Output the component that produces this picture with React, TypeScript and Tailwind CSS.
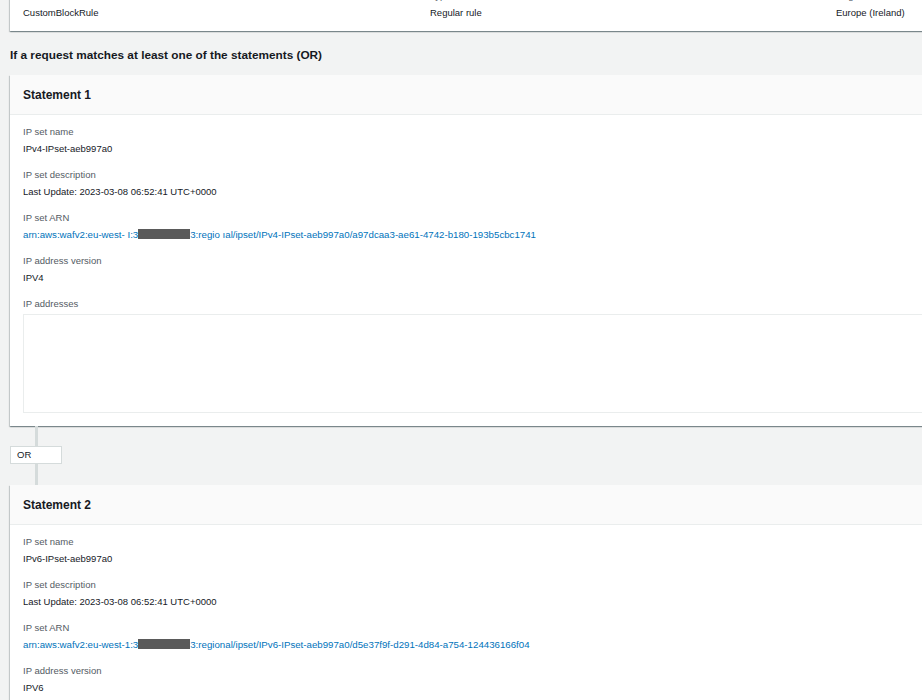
import React from 'react';

const font = { fontFamily: '"Liberation Sans", Arial, sans-serif' };

function Field({ label, children }: { label: string; children: React.ReactNode }) {
  return (
    <div className="flex flex-col">
      <div className="text-[9.5px] leading-[16px] text-[#545b64]">{label}</div>
      <div className="text-[9.5px] leading-[17px] text-[#16191f]">{children}</div>
    </div>
  );
}

function Redacted() {
  return <span className="inline-block h-[10px] w-[52px] align-[-1px] bg-[#5a5a5a]" />;
}

function StatementCard({
  title,
  name,
  arnHead,
  arnTail,
  version,
  showAddresses,
}: {
  title: string;
  name: string;
  arnHead: string;
  arnTail: string;
  version: string;
  showAddresses?: boolean;
}) {
  return (
    <div className="bg-white shadow-[0_1px_1px_0_rgba(0,28,36,0.3),1px_1px_1px_0_rgba(0,28,36,0.15),-1px_1px_1px_0_rgba(0,28,36,0.15)]">
      <div className="h-[40px] flex items-center px-[13px] bg-[#fafafa] border-b border-[#eaeded]">
        <span className="text-[12px] font-bold text-[#16191f]">{title}</span>
      </div>
      <div className="px-[13px] pt-[9px] pb-[13px] flex flex-col gap-[10px]">
        <Field label="IP set name">{name}</Field>
        <Field label="IP set description">Last Update: 2023-03-08 06:52:41 UTC+0000</Field>
        <Field label="IP set ARN">
          <span className="text-[#0073bb] text-[9.7px]">
            {arnHead}
            <Redacted />
            {arnTail}
          </span>
        </Field>
        <Field label="IP address version">{version}</Field>
        {showAddresses && (
          <div className="flex flex-col">
            <div className="text-[9.5px] leading-[16px] text-[#545b64]">IP addresses</div>
            <div className="mt-[2px] h-[99px] border border-[#eaeded] bg-white" />
          </div>
        )}
      </div>
    </div>
  );
}

export default function App() {
  return (
    <div className="w-full h-[700px] overflow-hidden bg-[#f2f3f3]" style={font}>
      <div className="w-[1260px] pl-[10px]">
        {/* rule summary */}
        <div className="-mt-[22px] bg-white shadow-[0_1px_1px_0_rgba(0,28,36,0.3),1px_1px_1px_0_rgba(0,28,36,0.15),-1px_1px_1px_0_rgba(0,28,36,0.15)] px-[13px] pt-[10px] pb-[10px] grid grid-cols-[407px_406px_1fr]">
          <Field label="Name">CustomBlockRule</Field>
          <Field label="Type">Regular rule</Field>
          <Field label="Region">Europe (Ireland)</Field>
        </div>

        <div className="pt-[16px] pb-[11px] text-[11.8px] leading-[17px] font-bold text-[#16191f]">
          If a request matches at least one of the statements (OR)
        </div>

        <StatementCard
          title="Statement 1"
          name="IPv4-IPset-aeb997a0"
          arnHead="arn:aws:wafv2:eu-west- I:3"
          arnTail="3:regio ıal/ipset/IPv4-IPset-aeb997a0/a97dcaa3-ae61-4742-b180-193b5cbc1741"
          version="IPV4"
          showAddresses
        />

        {/* OR connector */}
        <div className="flex flex-col">
          <div className="ml-[25px] w-[3px] h-[20px] bg-[#d5dbdb]" />
          <div className="w-[52px] h-[18px] flex items-center px-[6px] bg-white border border-[#d5dbdb] text-[9.5px] text-[#16191f]">
            OR
          </div>
          <div className="ml-[25px] w-[3px] h-[21px] bg-[#d5dbdb]" />
        </div>

        <StatementCard
          title="Statement 2"
          name="IPv6-IPset-aeb997a0"
          arnHead="arn:aws:wafv2:eu-west-1:3"
          arnTail="3:regional/ipset/IPv6-IPset-aeb997a0/d5e37f9f-d291-4d84-a754-124436166f04"
          version="IPV6"
          showAddresses
        />
      </div>
    </div>
  );
}
